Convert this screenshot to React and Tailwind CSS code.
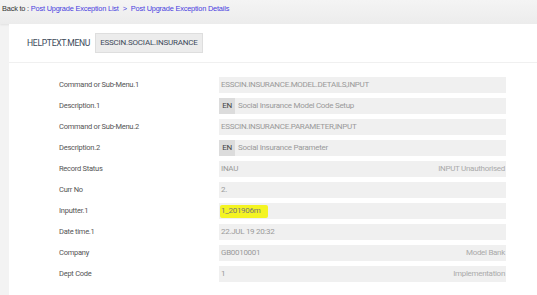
import React from 'react'

const rows = [
  { label: 'Command or Sub-Menu.1', value: 'ESSCIN.INSURANCE.MODEL.DETAILS,INPUT' },
  { label: 'Description.1', value: 'Social Insurance Model Code Setup', lang: 'EN' },
  { label: 'Command or Sub-Menu.2', value: 'ESSCIN.INSURANCE.PARAMETER,INPUT' },
  { label: 'Description.2', value: 'Social Insurance Parameter', lang: 'EN' },
  { label: 'Record Status', value: 'INAU', extra: 'INPUT Unauthorised' },
  { label: 'Curr No', value: '2.' },
  { label: 'Inputter.1', value: '1_201906m', marked: true },
  { label: 'Date time.1', value: '22.JUL 19 20:32' },
  { label: 'Company', value: 'GB0010001', extra: 'Model Bank' },
  { label: 'Dept Code', value: '1', extra: 'Implementation' },
]

const App = () => {
  return (
    <div className="w-[537px] h-[295px] overflow-hidden bg-[#f3f3f3] flex flex-col" style={{ fontFamily: "Roboto, 'Liberation Sans', sans-serif" }}>
      {/* breadcrumb */}
      <div className="h-[24px] shrink-0 bg-gradient-to-b from-[#f4f4f4] to-[#ececec] shadow-[0_1px_2px_rgba(0,0,0,0.08)] px-[2px] pt-[4px] text-[7.4px] leading-[10px] tracking-[-0.2px]" style={{ fontFamily: "'Liberation Sans', Arial, sans-serif" }}>
        <span className="text-[#333]">Back to : </span>
        <span className="text-[#4a3ee0]">Post Upgrade Exception List</span>
        <span className="text-[#4a3ee0] mx-[4px]">&gt;</span>
        <span className="text-[#4a3ee0]">Post Upgrade Exception Details</span>
      </div>

      <div className="flex-1 ml-[9px] bg-white">
        <div className="h-[39px] flex items-center gap-[5px] pl-[18px] border-b border-[#f0f0f0]">
          <span className="text-[8.6px] text-[#3c4a5a] tracking-[-0.3px]">HELPTEXT.MENU</span>
          <span className="h-[20px] px-[4px] flex items-center bg-[#ececec] border border-[#dedede] text-[8px] text-[#3c4a5a] tracking-[-0.2px]">ESSCIN.SOCIAL.INSURANCE</span>
        </div>

        <div className="flex flex-col gap-[5px] pt-[14px] pl-[50px] w-[497px]">
          {rows.map((r) => (
            <div key={r.label} className="flex items-center h-[16px]">
              <div className="w-[160px] text-[7.5px] text-[#555] tracking-[-0.25px]">{r.label}</div>
              <div className="flex-1 h-[16px] bg-[#f0f0f0] flex items-center pr-[1px] text-[8px] text-[#9a9a9a] tracking-[-0.3px]">
                {r.lang && (
                  <span className="h-full w-[16px] flex items-center justify-center bg-[#dcdcdc] text-[#444] mr-[3px]">{r.lang}</span>
                )}
                {r.marked ? (
                  <span className="ml-[1px] pl-[1px] pr-[8px] h-[13px] flex items-center bg-[#f4f422] text-[#777] rounded-[2px]">{r.value}</span>
                ) : (
                  <span className={r.lang ? '' : 'pl-[2px]'}>{r.value}</span>
                )}
                {r.extra && <span className="ml-auto text-[#aaa]">{r.extra}</span>}
              </div>
            </div>
          ))}
        </div>
      </div>
    </div>
  )
}

export default App
